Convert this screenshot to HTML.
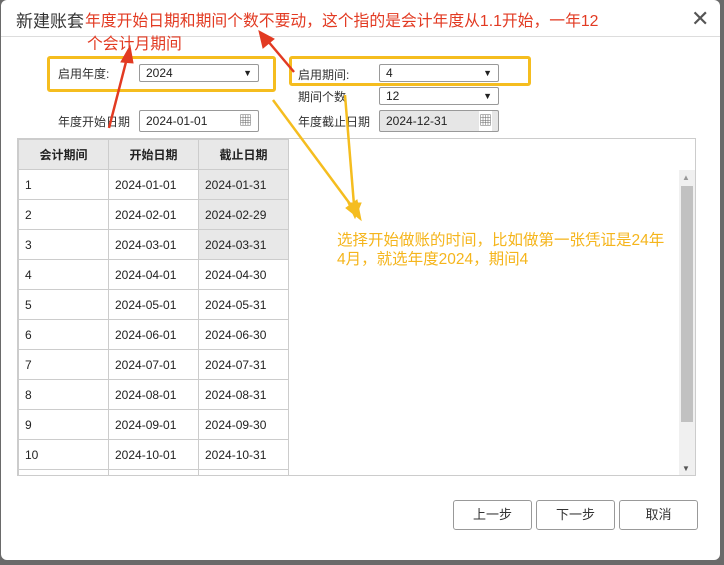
<!DOCTYPE html>
<html><head><meta charset="utf-8"><style>
*{box-sizing:border-box;margin:0;padding:0}
body{width:724px;height:565px;background:#6a6a6a;position:relative;overflow:hidden;font-family:"Liberation Sans","Noto Sans CJK SC",sans-serif;font-size:12px;color:#222}
.dlg{position:absolute;left:1px;top:0;width:719px;height:560px;background:#fff;border-radius:6px}
.abs{position:absolute}
.title{left:15px;top:7px;font-size:17px;color:#333}
.sep{left:0;top:36px;width:719px;height:1px;background:#ddd}
.close{left:690px;top:6px;font-size:22px;color:#555}
.red{color:#e23a22;font-size:15.8px;white-space:nowrap}
.lbl{font-size:12px;color:#333;white-space:nowrap}
.sel{border:1px solid #999;border-radius:2px;height:18px;font-size:12px;padding-left:6px;line-height:16px;background:#fff}
.sel span{position:absolute;right:6px;top:0;font-size:9px}
.ybox{border:3px solid #f5bd1f;border-radius:3px}
.grid{left:16px;top:138px;width:679px;height:338px;border:1px solid #ccc;overflow:hidden}
table{border-collapse:collapse;position:absolute;left:0;top:0}
td{width:90px;height:30px;border:1px solid #ccc;font-size:12px;padding-left:6px;color:#222}
th{width:90px;height:30px;border:1px solid #ccc;background:#e8e8e8;font-weight:bold;font-size:12px}
td.g{background:#e8e8e8}
.btn{top:500px;width:79px;height:30px;border:1px solid #999;border-radius:3px;text-align:center;line-height:28px;font-size:13px;color:#333;background:#fff}
.ytxt{left:336px;top:231px;color:#f5b51c;font-size:15.5px;line-height:19px;white-space:nowrap}
</style></head><body>
<div class="dlg">
<div class="abs title">新建账套</div>
<div class="abs sep"></div>
<div class="abs close">✕</div>

<div class="abs ybox" style="left:46px;top:56px;width:229px;height:36px"></div>
<div class="abs ybox" style="left:288px;top:56px;width:242px;height:30px"></div>

<div class="abs lbl" style="left:57px;top:65px">启用年度:</div>
<div class="abs sel" style="left:138px;top:64px;width:120px">2024<span>▼</span></div>
<div class="abs lbl" style="left:57px;top:113px">年度开始日期</div>
<div class="abs sel" style="left:138px;top:110px;width:120px;height:22px;line-height:20px">2024-01-01<span style="font-size:13px;color:#666">▦</span></div>

<div class="abs lbl" style="left:297px;top:66px">启用期间:</div>
<div class="abs sel" style="left:378px;top:64px;width:120px">4<span>▼</span></div>
<div class="abs lbl" style="left:297px;top:88px">期间个数</div>
<div class="abs sel" style="left:378px;top:87px;width:120px">12<span>▼</span></div>
<div class="abs lbl" style="left:297px;top:113px">年度截止日期</div>
<div class="abs sel" style="left:378px;top:110px;width:120px;height:22px;line-height:20px;background:#e6e6e6">2024-12-31<span style="font-size:13px;color:#666;background:#fff">▦</span></div>

<div class="abs grid">
<table>
<tr><th>会计期间</th><th>开始日期</th><th>截止日期</th></tr>
<tr><td>1</td><td>2024-01-01</td><td class="g">2024-01-31</td></tr>
<tr><td>2</td><td>2024-02-01</td><td class="g">2024-02-29</td></tr>
<tr><td>3</td><td>2024-03-01</td><td class="g">2024-03-31</td></tr>
<tr><td>4</td><td>2024-04-01</td><td>2024-04-30</td></tr>
<tr><td>5</td><td>2024-05-01</td><td>2024-05-31</td></tr>
<tr><td>6</td><td>2024-06-01</td><td>2024-06-30</td></tr>
<tr><td>7</td><td>2024-07-01</td><td>2024-07-31</td></tr>
<tr><td>8</td><td>2024-08-01</td><td>2024-08-31</td></tr>
<tr><td>9</td><td>2024-09-01</td><td>2024-09-30</td></tr>
<tr><td>10</td><td>2024-10-01</td><td>2024-10-31</td></tr>
<tr><td>11</td><td>2024-11-01</td><td>2024-11-30</td></tr>
</table>
<div class="abs" style="left:661px;top:31px;width:16px;height:306px;background:#f0f0f0"></div>
<div class="abs" style="left:663px;top:47px;width:12px;height:236px;background:#c1c1c1"></div>
<div class="abs" style="left:664px;top:34px;font-size:8px;color:#999">▲</div>
<div class="abs" style="left:664px;top:325px;font-size:8px;color:#555">▼</div>
</div>

<div class="abs btn" style="left:452px">上一步</div>
<div class="abs btn" style="left:535px">下一步</div>
<div class="abs btn" style="left:618px">取消</div>

<div class="abs red" style="left:84px;top:8px">年度开始日期和期间个数不要动，这个指的是会计年度从1.1开始，一年12</div>
<div class="abs red" style="left:86px;top:31px">个会计月期间</div>

<div class="abs ytxt">选择开始做账的时间，比如做第一张凭证是24年<br>4月，就选年度2024，期间4</div>

<svg class="abs" style="left:0;top:0" width="724" height="565">
<g stroke="#e23a22" fill="#e23a22">
<line x1="108" y1="128" x2="126" y2="58" stroke-width="2.5"/>
<polygon points="129,46 120,62 132,63"/>
<line x1="293" y1="72" x2="266" y2="40" stroke-width="2.5"/>
<polygon points="258,31 262,48 273,39"/>
</g>
<g stroke="#f5bd1f" fill="#f5bd1f">
<line x1="272" y1="100" x2="352" y2="208" stroke-width="2.5"/>
<polygon points="360,220 345,208 356,200"/>
<line x1="344" y1="95" x2="353" y2="205" stroke-width="2.5"/>
<polygon points="354,218 347,203 360,203"/>
</g>
</svg>
</div>
</body></html>
